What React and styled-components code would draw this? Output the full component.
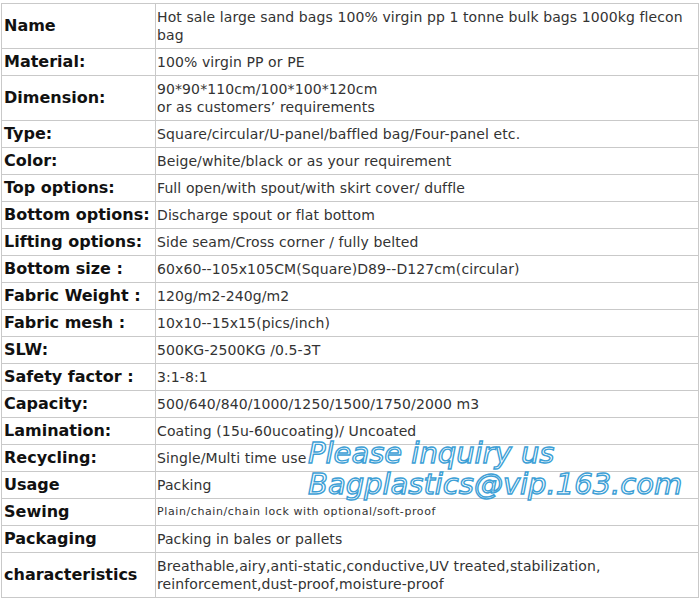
import React from "react";
import styled, { createGlobalStyle } from "styled-components";

const Global = createGlobalStyle`
  html, body { margin: 0; padding: 0; background: #fff; }
  body { font-family: "DejaVu Sans", Verdana, sans-serif; }
`;

const Page = styled.div`
  position: relative;
  padding: 3px 1px 0 1px;
  width: 698px;
`;

const Table = styled.table`
  border-collapse: collapse;
  width: 698px;
  table-layout: fixed;
`;

const Row = styled.tr``;

const Label = styled.td`
  width: 148px;
  border: 1px solid #c9c9c9;
  padding: 4px 3px 4px 2px;
  font-family: "DejaVu Sans", Verdana, sans-serif;
  font-weight: bold;
  font-size: 16px;
  line-height: 18px;
  color: #111;
  vertical-align: middle;
  white-space: nowrap;
`;

const Value = styled.td`
  border: 1px solid #c9c9c9;
  padding: 4px 3px 4px 1px;
  font-family: "DejaVu Sans", Verdana, sans-serif;
  font-size: ${(p) => (p.$small ? "11px" : "14px")};
  letter-spacing: ${(p) => (p.$small ? "0.6px" : "0.1px")};
  line-height: 18px;
  color: #333;
  vertical-align: middle;
`;

const Watermark = styled.div`
  position: absolute;
  left: 308px;
  top: 438px;
  font-family: "DejaVu Sans", Verdana, sans-serif;
  font-style: italic;
  font-size: 29px;
  line-height: 31px;
  color: #fff;
  -webkit-text-stroke: 1.4px #3d9fd6;
  pointer-events: none;
  white-space: nowrap;
`;

const rows = [
  ["Name", ["Hot sale large sand bags 100% virgin pp 1 tonne bulk bags 1000kg flecon bag"]],
  ["Material:", ["100% virgin PP or PE"]],
  ["Dimension:", ["90*90*110cm/100*100*120cm", "or as customers\u2019 requirements"]],
  ["Type:", ["Square/circular/U-panel/baffled bag/Four-panel etc."]],
  ["Color:", ["Beige/white/black or as your requirement"]],
  ["Top options:", ["Full open/with spout/with skirt cover/ duffle"]],
  ["Bottom options:", ["Discharge spout or flat bottom"]],
  ["Lifting options:", ["Side seam/Cross corner / fully belted"]],
  ["Bottom size :", ["60x60--105x105CM(Square)D89--D127cm(circular)"]],
  ["Fabric Weight :", ["120g/m2-240g/m2"]],
  ["Fabric mesh :", ["10x10--15x15(pics/inch)"]],
  ["SLW:", ["500KG-2500KG /0.5-3T"]],
  ["Safety factor :", ["3:1-8:1"]],
  ["Capacity:", ["500/640/840/1000/1250/1500/1750/2000 m3"]],
  ["Lamination:", ["Coating (15u-60ucoating)/ Uncoated"]],
  ["Recycling:", ["Single/Multi time use"]],
  ["Usage", ["Packing"]],
  ["Sewing", ["Plain/chain/chain lock with optional/soft-proof"], true],
  ["Packaging", ["Packing in bales or pallets"]],
  ["characteristics", ["Breathable,airy,anti-static,conductive,UV treated,stabilization,", "reinforcement,dust-proof,moisture-proof"]],
];

export default function App() {
  return (
    <>
      <Global />
      <Page>
        <Table>
          <tbody>
            {rows.map(([label, lines, small]) => (
              <Row key={label}>
                <Label>{label}</Label>
                <Value $small={small}>
                  {lines.map((l, i) => (
                    <React.Fragment key={i}>
                      {i > 0 && <br />}
                      {l}
                    </React.Fragment>
                  ))}
                </Value>
              </Row>
            ))}
          </tbody>
        </Table>
        <Watermark>
          Please inquiry us
          <br />
          Bagplastics@vip.163.com
        </Watermark>
      </Page>
    </>
  );
}
